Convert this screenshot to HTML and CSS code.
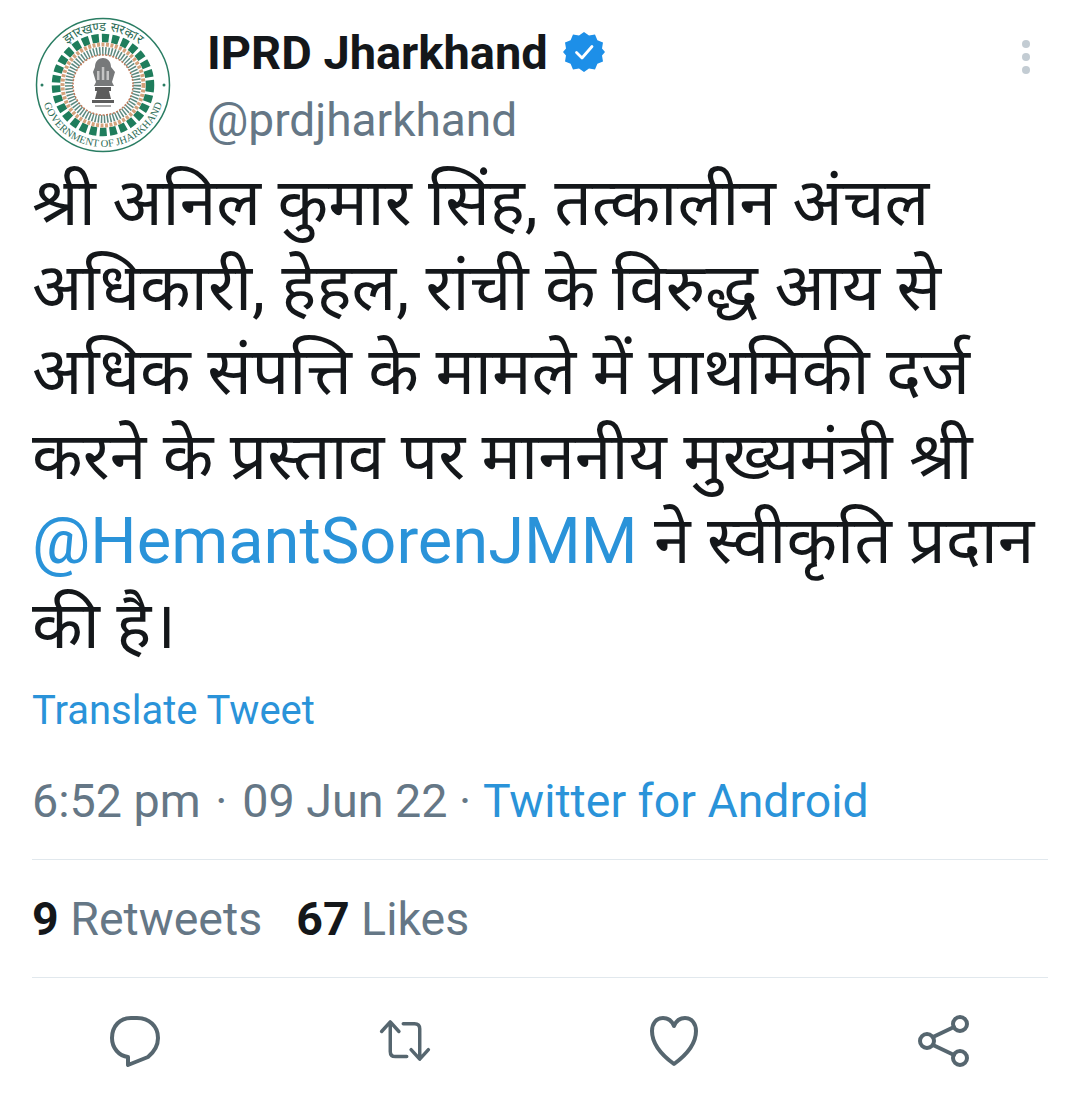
FILE: index.html
```html
<!DOCTYPE html>
<html lang="hi">
<head>
    <meta charset="UTF-8">
    <title>IPRD Jharkhand Tweet</title>
    <link rel="stylesheet" href="styles.css">
</head>
<body>
    <main class="tweet">
        <!-- Header -->
        <header class="tweet-head">
            <svg class="avatar" viewBox="0 0 136 136" role="img" aria-label="Government of Jharkhand seal">
                <defs>
                    <path id="arc-top" d="M 14 68 A 54 54 0 0 1 122 68"/>
                    <path id="arc-bottom" d="M 6 68 A 62 62 0 0 0 130 68"/>
                </defs>
                <circle cx="68" cy="68" r="66.500" fill="#fff" stroke="#2a7d63" stroke-width="1.500"/>
                <circle cx="68" cy="68" r="47" fill="none" stroke="#1f7d5c" stroke-width="8.500" stroke-dasharray="7 3"/>
                <circle cx="68" cy="68" r="40.500" fill="none" stroke="#d4a27c" stroke-width="4" stroke-dasharray="3 1.500"/>
                <circle cx="68" cy="68" r="34" fill="none" stroke="#5d8a80" stroke-width="8" stroke-dasharray="1.500 1.500"/>
                <circle cx="68" cy="68" r="30" fill="none" stroke="#c27a5a" stroke-width="1.500" stroke-dasharray="2 1.500"/>
                <circle cx="68" cy="68" r="28.500" fill="#fff"/>
                <text class="seal-text seal-top"><textPath href="#arc-top" startOffset="50%">झारखण्ड सरकार</textPath></text>
                <text class="seal-text seal-bottom"><textPath href="#arc-bottom" startOffset="50%">GOVERNMENT OF JHARKHAND</textPath></text>
                <circle cx="7" cy="68" r="1.500" fill="#2a7d63"/>
                <circle cx="129" cy="68" r="1.500" fill="#2a7d63"/>
                <!-- lion capital -->
                <path d="M60 50c0-6 4-9 8-9s8 3 8 9l4 5-3 10 2 4H59l2-4-3-10z" fill="#77797a"/>
                <path d="M62 54h2.500v9H62zM66.800 50h2.500v13h-2.500zM71.500 54H74v9h-2.500z" fill="#c4c4c4"/>
                <path d="M60 70h16v4H60zM62 74h12l2 8H60zM57 83h22v3H57z" fill="#5c5c5c"/>
                <path d="M60 88h16v2H60z" fill="#a8a8a8"/>
            </svg>
            <div class="author">
                <div class="author-name">
                    <span>IPRD Jharkhand</span>
                    <svg class="badge" viewBox="0 0 40 40">
                        <path d="M20 0l5 3.600 6-1 2.400 5.600 5.600 2.400-1 6L41 20l-3 3.400 1 6-5.600 2.400L31 37.400l-6-1L20 40l-5-3.600-6 1-2.400-5.600L1 29.400l1-6L-1 20l3-3.400-1-6 5.600-2.400L9 2.600l6 1z" fill="#1d8fe8"/>
                        <path d="M12.500 20.500l5.500 5.500 10-11.500" fill="none" stroke="#fff" stroke-width="2.800" stroke-linecap="round" stroke-linejoin="round"/>
                    </svg>
                </div>
                <div class="author-handle">@prdjharkhand</div>
            </div>
            <div class="more">
                <span class="dot"></span>
                <span class="dot"></span>
                <span class="dot"></span>
            </div>
        </header>

        <!-- Tweet body -->
        <p class="tweet-text">श्री अनिल कुमार सिंह, तत्कालीन अंचल अधिकारी, हेहल, रांची के विरुद्ध आय से अधिक संपत्ति के मामले में प्राथमिकी दर्ज करने के प्रस्ताव पर माननीय मुख्यमंत्री श्री <a class="link mention" href="#">@HemantSorenJMM</a> ने स्वीकृति प्रदान की है।</p>

        <a class="link translate" href="#">Translate Tweet</a>

        <div class="meta">6:52 pm <span class="sep">·</span> 09 Jun 22 · <a class="link" href="#">Twitter for Android</a></div>

        <div class="stats">
            <span><b>9</b> Retweets</span>
            <span><b>67</b> Likes</span>
        </div>

        <!-- Action icons -->
        <div class="actions">
            <svg class="icon" viewBox="0 0 52 52">
                <path d="M22 3h6c12 0 21 8 21 20 0 8-4 14-10 19L19 50v-8C10 41 3 33 3 23 3 11 11 3 22 3z"/>
            </svg>
            <svg class="icon" viewBox="0 0 60 52">
                <path d="M3 15L13 4l10 11M13 5v33c0 4 2 6 6 6h13M28 6h13c4 0 6 2 6 6v33M37 36l10 11 10-11"/>
            </svg>
            <svg class="icon" viewBox="0 0 52 52">
                <path d="M26 11C24 6 20 3 15 3 8 3 4 9 4 16c0 13 11 25 22 33 11-8 22-20 22-33 0-7-4-13-11-13-5 0-9 3-11 8z"/>
            </svg>
            <svg class="icon" viewBox="0 0 52 52">
                <circle cx="9" cy="26" r="7"/>
                <circle cx="42" cy="9" r="7"/>
                <circle cx="42" cy="43" r="7"/>
                <path d="M15 22l21-10M15 30l21 10"/>
            </svg>
        </div>
    </main>
</body>
</html>
```

FILE: styles.css
```css
* {
    box-sizing: border-box;
}

body {
    margin: 0;
    background: #fff;
    color: #14171a;
    font-family: Roboto, "Noto Sans", "Noto Sans Devanagari", "Lohit Devanagari", "Liberation Sans", sans-serif;
}

.tweet {
    width: 1070px;
    height: 1093px;
    padding: 17px 22px 0 32px;
    overflow: hidden;
}

.tweet-head {
    display: flex;
    align-items: flex-start;
}

.avatar {
    width: 136px;
    height: 136px;
    margin-left: 3px;
    flex-shrink: 0;
}

.seal-text {
    fill: #2b6b55;
    text-anchor: middle;
    font-family: "Liberation Serif", serif;
}

.seal-top {
    font-size: 13px;
}

.seal-bottom {
    font-size: 10.500px;
}

.author {
    margin-left: 36px;
    flex-grow: 1;
}

.author-name {
    display: flex;
    align-items: center;
    gap: 16px;
    height: 70px;
    font-size: 47px;
    font-weight: 700;
}

.badge {
    width: 40px;
    height: 40px;
    overflow: visible;
}

.author-handle {
    font-size: 46px;
    line-height: 66px;
    color: #657786;
}

.more {
    display: flex;
    flex-direction: column;
    gap: 5px;
    margin: 23px 18px 0 0;
}

.dot {
    width: 8px;
    height: 8px;
    border-radius: 50%;
    background: #c3ccd3;
}

.tweet-text {
    margin: 8px 0 0;
    font-size: 66px;
    line-height: 84.500px;
}

.link {
    color: #2a93d9;
    text-decoration: none;
}

.mention {
    font-size: 65px;
}

.translate {
    display: block;
    margin-top: 18px;
    font-size: 40px;
    line-height: 50px;
}

.meta {
    margin-top: 40px;
    padding-bottom: 33px;
    font-size: 46.700px;
    line-height: 50px;
    color: #657786;
    border-bottom: 1px solid #e1e8ed;
}

.meta .link {
    font-size: 46.400px;
}

.sep {
    margin: 0 3px;
}

.stats {
    display: flex;
    gap: 34px;
    height: 118px;
    align-items: center;
    font-size: 46.500px;
    color: #657786;
    border-bottom: 1px solid #e1e8ed;
}

.stats b {
    color: #14171a;
}

.actions {
    display: flex;
    justify-content: space-between;
    padding: 37px 78px 0 77px;
}

.icon {
    width: 52px;
    height: 52px;
    fill: none;
    stroke: #56666f;
    stroke-width: 4;
    stroke-linecap: round;
    stroke-linejoin: round;
}
```
